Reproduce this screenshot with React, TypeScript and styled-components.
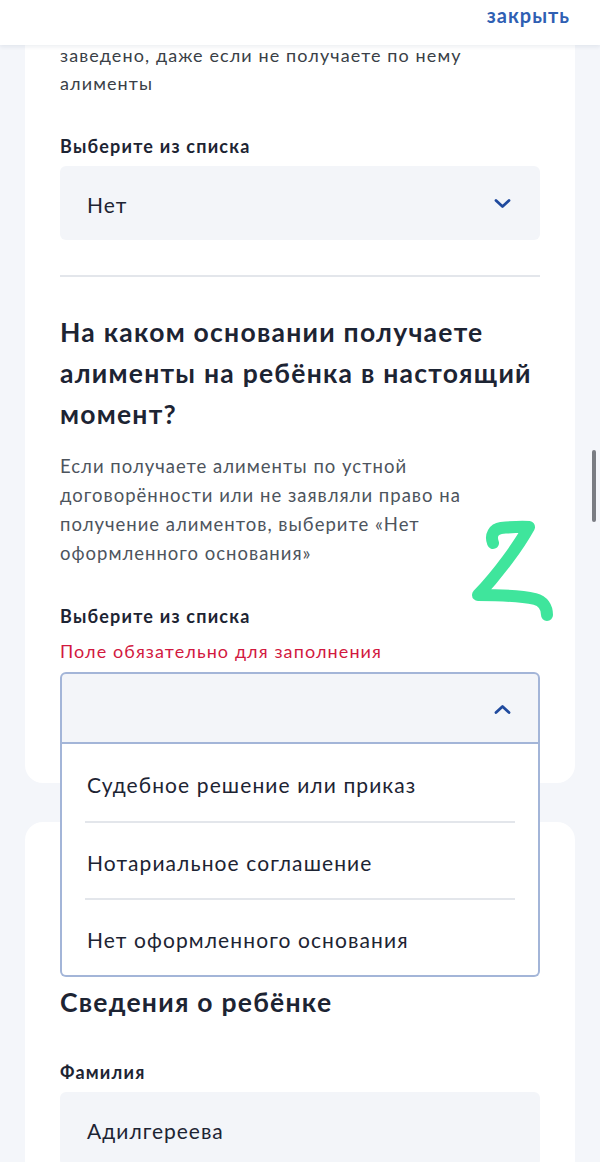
import React from 'react';
import styled, {createGlobalStyle} from 'styled-components';

const colors = {
    page: '#f4f6fa',
    white: '#ffffff',
    text: '#1d2433',
    body: '#3a3f47',
    muted: '#4d545d',
    blue: '#2f5fb3',
    chevron: '#1f4a9e',
    field: '#f3f5f9',
    line: '#e3e6eb',
    error: '#d2193f',
    focus: '#a3b5d8',
};

const fonts = {
    primary: `Lato, "Noto Sans", "Liberation Sans", sans-serif`,
};

const GlobalStyle = createGlobalStyle`
  html, body {
    margin: 0;
    padding: 0;
    background: ${colors.page};
    font-family: ${fonts.primary};
  }
  * {
    box-sizing: border-box;
  }
`;

const Page = styled.div`
  position: relative;
  width: 600px;
  height: 1162px;
  overflow: hidden;
  background: ${colors.page};
`;

const TopBar = styled.div`
  position: relative;
  z-index: 5;
  height: 45px;
  background: ${colors.white};
  display: flex;
  align-items: center;
  justify-content: flex-end;
  padding-right: 30px;
  box-shadow: 0 2px 4px rgba(30, 50, 90, 0.08);
`;

const CloseLink = styled.a`
  font-family: ${fonts.primary};
  font-size: 20px;
  font-weight: 700;
  letter-spacing: 1px;
  color: ${colors.blue};
  text-decoration: none;
  margin-top: -16px;
`;

const Content = styled.div`
  padding: 0 25px;
  display: flex;
  flex-direction: column;
  gap: 39px;
`;

const Card = styled.section<{ $top?: number }>`
  position: relative;
  background: ${colors.white};
  border-radius: ${({$top}) => ($top ? '18px' : '0 0 18px 18px')};
  padding: ${({$top}) => ($top ? `${$top}px` : '0')} 35px 39px;
  display: flex;
  flex-direction: column;
`;

const Paragraph = styled.p<{ $lh?: number }>`
  margin: 0;
  font-family: ${fonts.primary};
  font-size: 18px;
  letter-spacing: 1.1px;
  line-height: ${({$lh}) => $lh ?? 28}px;
  color: ${colors.body};
`;

const Lead = styled(Paragraph)`
  margin-top: -4px;
`;

const Hint = styled(Paragraph)`
  margin-top: 17px;
  font-size: 18.5px;
  letter-spacing: 1px;
  color: ${colors.muted};
`;

const Label = styled.div<{ $gap: number }>`
  margin-top: ${({$gap}) => $gap}px;
  font-family: ${fonts.primary};
  font-size: 18px;
  letter-spacing: 1.2px;
  line-height: 20px;
  font-weight: 700;
  color: ${colors.text};
`;

const ErrorText = styled.div`
  margin-top: 13px;
  font-family: ${fonts.primary};
  font-size: 18px;
  letter-spacing: 1.1px;
  line-height: 24px;
  color: ${colors.error};
`;

const FieldWrap = styled.div<{ $gap: number }>`
  position: relative;
  margin-top: ${({$gap}) => $gap}px;
`;

const SelectBox = styled.div<{ $open?: boolean }>`
  height: ${({$open}) => ($open ? 72 : 74)}px;
  background: ${colors.field};
  border-radius: ${({$open}) => ($open ? '6px 6px 0 0' : '6px')};
  border: ${({$open}) => ($open ? `2px solid ${colors.focus}` : 'none')};
  display: flex;
  align-items: center;
  justify-content: space-between;
  padding: ${({$open}) => ($open ? '2px 27px 0 25px' : '2px 29px 0 27px')};
`;

const FieldValue = styled.span`
  font-family: ${fonts.primary};
  font-size: 21px;
  letter-spacing: 1px;
  color: ${colors.text};
`;

const Divider = styled.hr`
  margin: 35px 0 0;
  border: none;
  height: 2px;
  background: ${colors.line};
`;

const Heading = styled.h2<{ $gap: number; $lh?: number }>`
  margin: ${({$gap}) => $gap}px 0 0;
  font-family: ${fonts.primary};
  font-size: 26.5px;
  letter-spacing: 1.25px;
  line-height: ${({$lh}) => $lh ?? 41}px;
  font-weight: 700;
  color: ${colors.text};
`;

const Menu = styled.ul`
  position: absolute;
  z-index: 3;
  top: 100%;
  left: 0;
  right: 0;
  margin: 0;
  padding: 0 23px;
  list-style: none;
  background: ${colors.white};
  border: 2px solid ${colors.focus};
  border-top: none;
  border-radius: 0 0 6px 6px;
`;

const MenuItem = styled.li`
  height: 79px;
  display: flex;
  align-items: center;
  padding: 4px 0 0 2px;
  font-family: ${fonts.primary};
  font-size: 21px;
  letter-spacing: 1.1px;
  color: ${colors.text};
  border-bottom: 2px solid ${colors.line};

  &:nth-child(2) {
    height: 77px;
  }

  &:last-child {
    border-bottom: none;
    height: 75px;
  }
`;

const Scrollbar = styled.div`
  position: absolute;
  z-index: 6;
  right: 4px;
  top: 450px;
  width: 4px;
  height: 72px;
  border-radius: 2px;
  background: #7a7d83;
`;

const Scribble = styled.svg`
  position: absolute;
  z-index: 6;
  left: 465px;
  top: 515px;
`;

const Chevron = ({up}: { up?: boolean }) => (
    <svg width="17" height="10" viewBox="0 0 17 10">
        <path
            d={up ? 'M2 8.5 L8.5 2.5 L15 8.5' : 'M2 1.5 L8.5 7.5 L15 1.5'}
            fill="none"
            stroke={colors.chevron}
            strokeWidth="2.8"
            strokeLinecap="round"
            strokeLinejoin="round"
        />
    </svg>
);

const options = [
    'Судебное решение или приказ',
    'Нотариальное соглашение',
    'Нет оформленного основания',
];

const App = () => {
    return (
        <Page>
            <GlobalStyle/>
            <TopBar>
                <CloseLink href="#">закрыть</CloseLink>
            </TopBar>
            <Content>
                <Card>
                    <Lead>заведено, даже если не получаете по нему<br/>алименты</Lead>

                    <Label $gap={39}>Выберите из списка</Label>
                    <FieldWrap $gap={10}>
                        <SelectBox>
                            <FieldValue>Нет</FieldValue>
                            <Chevron/>
                        </SelectBox>
                    </FieldWrap>

                    <Divider/>

                    <Heading $gap={35}>
                        На каком основании получаете<br/>
                        алименты на ребёнка в настоящий<br/>
                        момент?
                    </Heading>
                    <Hint $lh={29}>
                        Если получаете алименты по устной<br/>
                        договорённости или не заявляли право на<br/>
                        получение алиментов, выберите «Нет<br/>
                        оформленного основания»
                    </Hint>

                    <Label $gap={38}>Выберите из списка</Label>
                    <ErrorText>Поле обязательно для заполнения</ErrorText>
                    <FieldWrap $gap={9}>
                        <SelectBox $open>
                            <span/>
                            <Chevron up/>
                        </SelectBox>
                        <Menu>
                            {options.map((o) => (
                                <MenuItem key={o}>{o}</MenuItem>
                            ))}
                        </Menu>
                    </FieldWrap>
                </Card>

                <Card $top={162}>
                    <Heading $gap={0} $lh={36}>Сведения о ребёнке</Heading>
                    <Label $gap={42}>Фамилия</Label>
                    <FieldWrap $gap={10}>
                        <SelectBox>
                            <FieldValue>Адилгереева</FieldValue>
                        </SelectBox>
                    </FieldWrap>
                </Card>
            </Content>

            <Scrollbar/>
            <Scribble width="100" height="115" viewBox="0 0 100 115">
                <path
                    d="M28 28 C25 20 29 14 36 13 C46 12 56 11 64 12 C54 30 34 58 13 80 C30 80 52 80 70 84 C78 86 82 92 82 100"
                    fill="none"
                    stroke="#3fe59c"
                    strokeWidth="12"
                    strokeLinecap="round"
                    strokeLinejoin="round"
                />
            </Scribble>
        </Page>
    );
};

export default App;
